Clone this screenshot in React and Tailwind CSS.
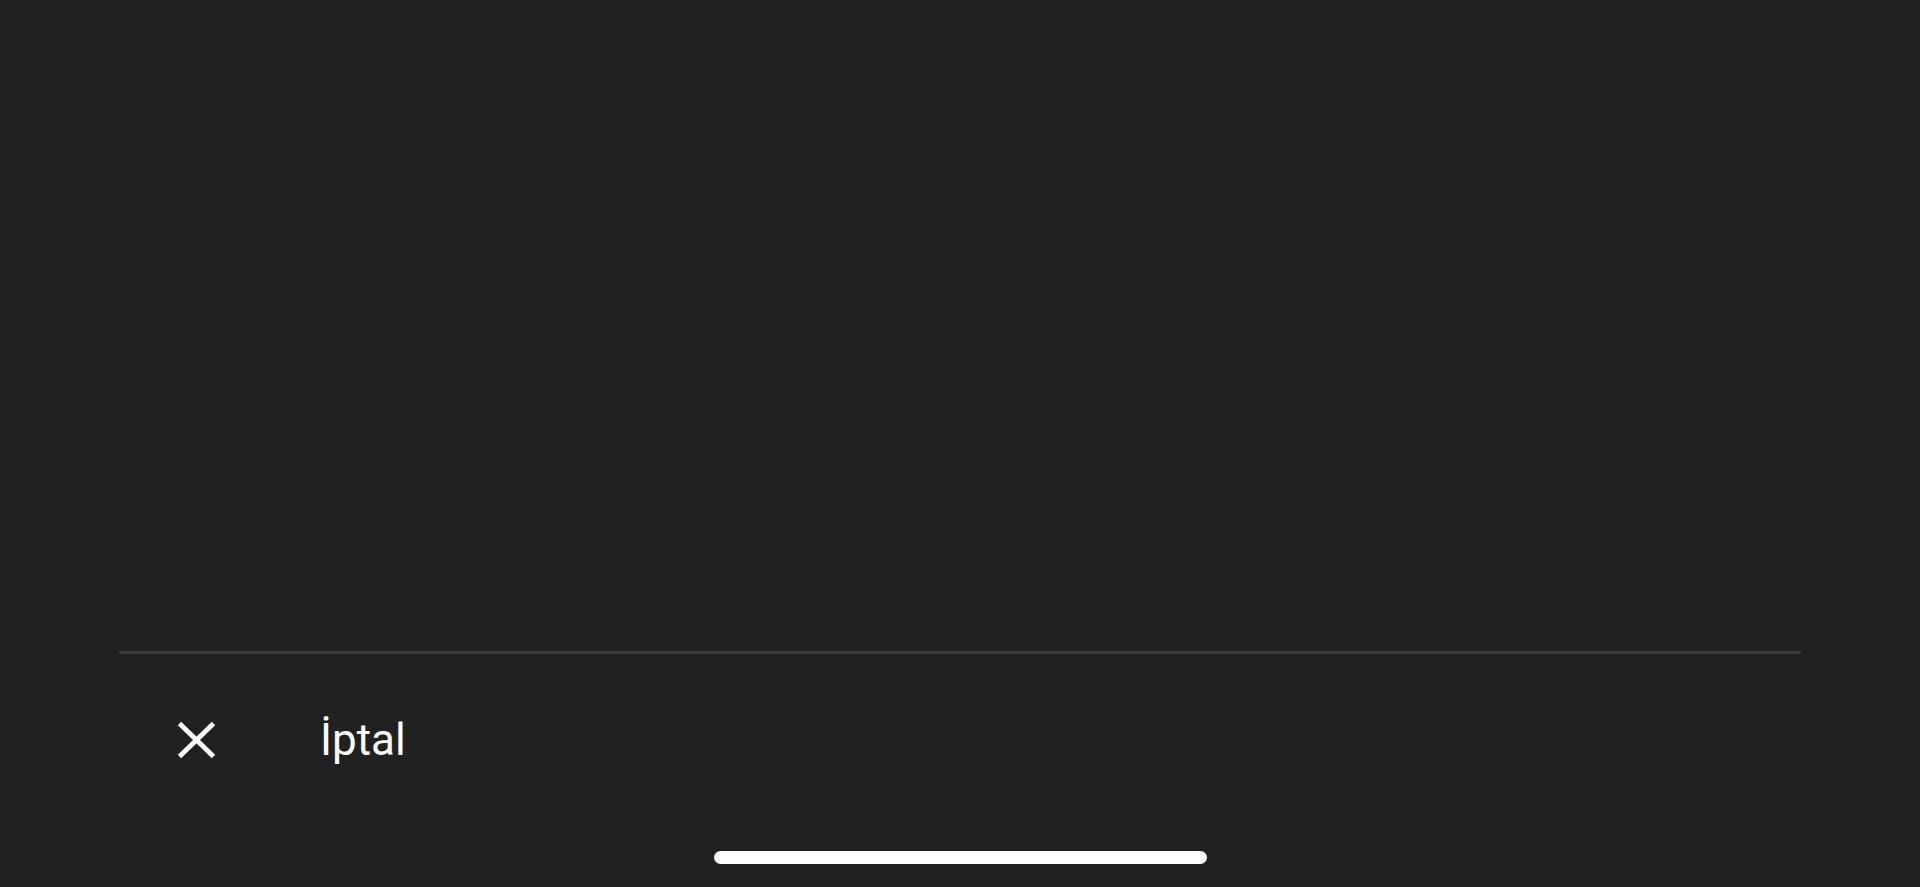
export default function App() {
    return (
        <div className="w-full h-[887px] bg-[#212121] flex flex-col overflow-hidden" style={{ fontFamily: 'Roboto, "Noto Sans", sans-serif' }}>
            {/* empty content area */}
            <div className="flex-1"></div>

            {/* divider */}
            <div className="mx-[119px] h-[3px] bg-[#3b3b3b]"></div>

            {/* cancel row */}
            <div className="h-[172px] flex items-center pl-[177px]">
                <svg width="39" height="38" viewBox="0 0 39 38" className="shrink-0">
                    <path d="M2.5 2.5 L36.5 35.5 M36.5 2.5 L2.5 35.5" stroke="#ffffff" strokeWidth="4.8" fill="none" />
                </svg>
                <span className="ml-[104px] text-[44px] leading-none text-white">İptal</span>
            </div>

            {/* home indicator */}
            <div className="h-[61px] flex justify-center pt-[25px]">
                <div className="w-[493px] h-[13px] rounded-full bg-white"></div>
            </div>
        </div>
    )
}
